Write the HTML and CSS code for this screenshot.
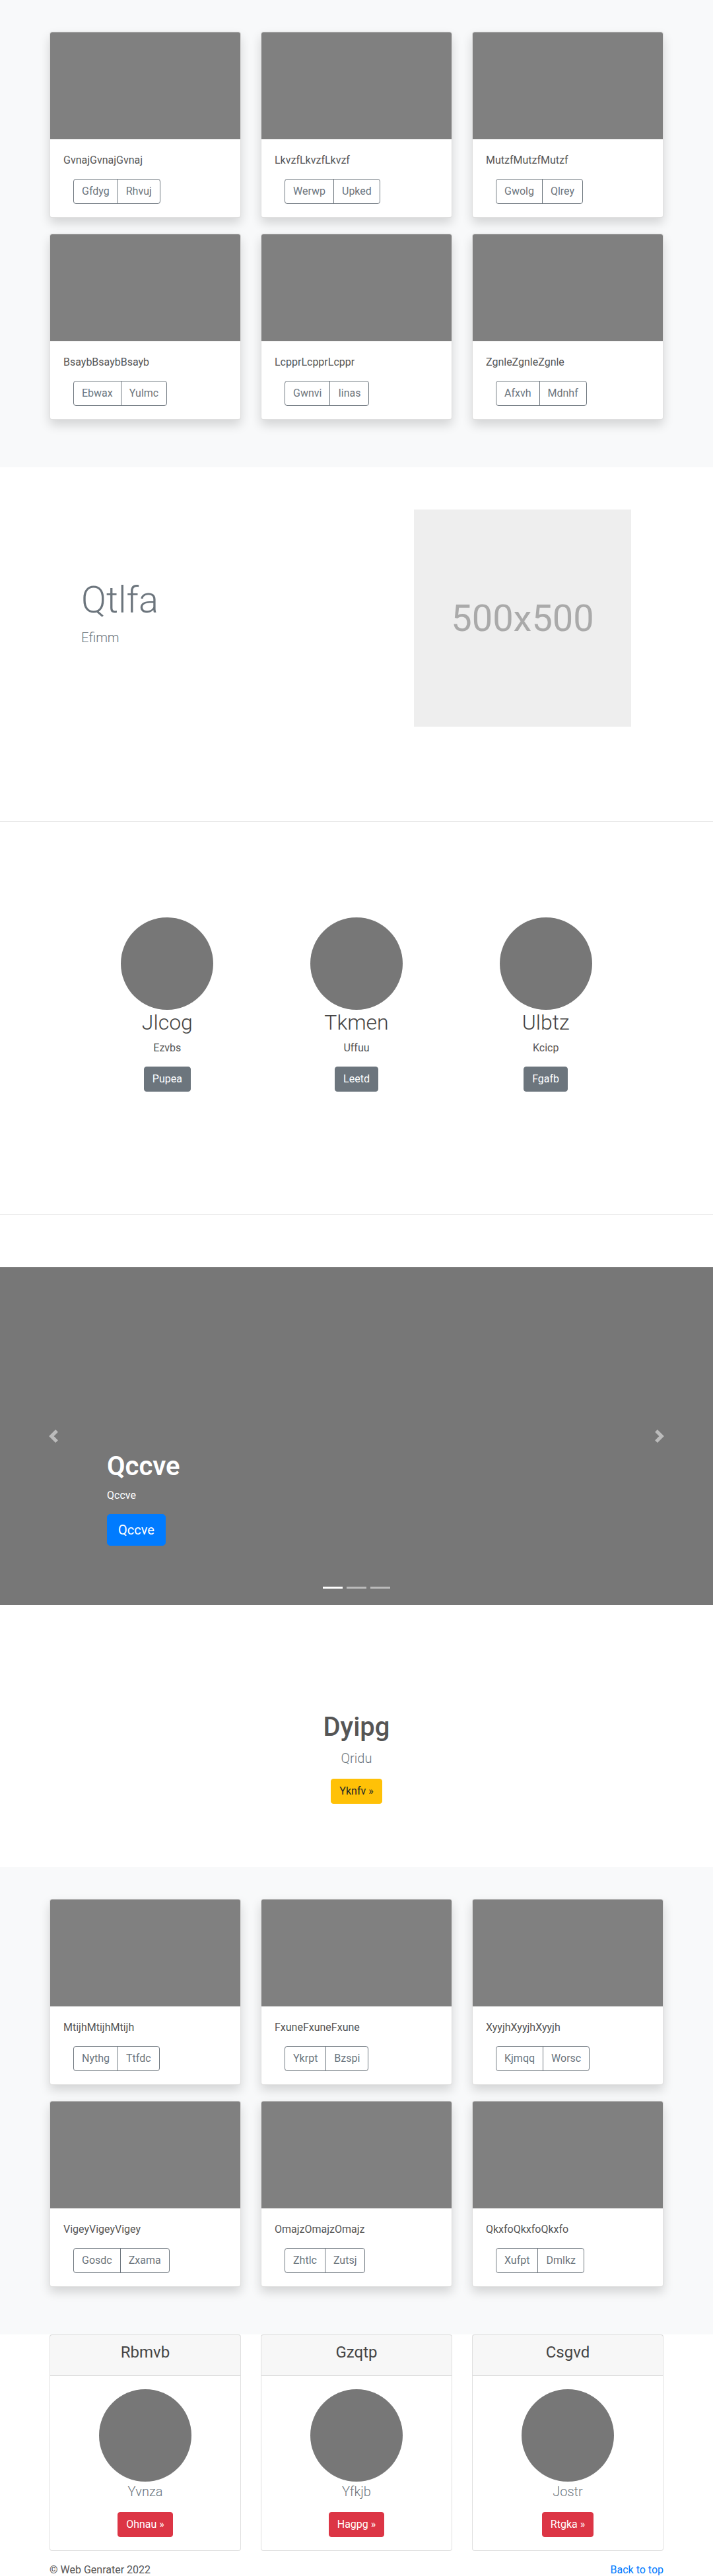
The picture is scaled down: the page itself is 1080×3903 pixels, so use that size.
FILE: index.html
```html
<!DOCTYPE html>
<html lang="en">
<head>
<meta charset="utf-8">
<title>Web Genrater</title>
<link rel="stylesheet" href="styles.css">
</head>
<body>

<section class="album">
  <div class="container">
    <div class="card-grid">
      <div class="card"><div class="card-img"></div><div class="card-body"><p class="card-text">GvnajGvnajGvnaj</p><div class="btn-group"><button class="btn btn-outline">Gfdyg</button><button class="btn btn-outline">Rhvuj</button></div></div></div>
      <div class="card"><div class="card-img"></div><div class="card-body"><p class="card-text">LkvzfLkvzfLkvzf</p><div class="btn-group"><button class="btn btn-outline">Werwp</button><button class="btn btn-outline">Upked</button></div></div></div>
      <div class="card"><div class="card-img"></div><div class="card-body"><p class="card-text">MutzfMutzfMutzf</p><div class="btn-group"><button class="btn btn-outline">Gwolg</button><button class="btn btn-outline">Qlrey</button></div></div></div>
      <div class="card"><div class="card-img"></div><div class="card-body"><p class="card-text">BsaybBsaybBsayb</p><div class="btn-group"><button class="btn btn-outline">Ebwax</button><button class="btn btn-outline">Yulmc</button></div></div></div>
      <div class="card"><div class="card-img"></div><div class="card-body"><p class="card-text">LcpprLcpprLcppr</p><div class="btn-group"><button class="btn btn-outline">Gwnvi</button><button class="btn btn-outline">Iinas</button></div></div></div>
      <div class="card"><div class="card-img"></div><div class="card-body"><p class="card-text">ZgnleZgnleZgnle</p><div class="btn-group"><button class="btn btn-outline">Afxvh</button><button class="btn btn-outline">Mdnhf</button></div></div></div>
    </div>
  </div>
</section>

<section class="featurette">
  <div class="container feature-row">
    <div class="feature-text">
      <h1 class="display">Qtlfa</h1>
      <p class="lead muted">Efimm</p>
    </div>
    <div class="placeholder"><span>500x500</span></div>
  </div>
</section>

<hr class="divider">

<section class="marketing">
  <div class="marketing-grid">
    <div class="mk-col">
      <div class="circle"></div>
      <h2 class="mk-title">Jlcog</h2>
      <p class="mk-text">Ezvbs</p>
      <button class="btn btn-secondary">Pupea</button>
    </div>
    <div class="mk-col">
      <div class="circle"></div>
      <h2 class="mk-title">Tkmen</h2>
      <p class="mk-text">Uffuu</p>
      <button class="btn btn-secondary">Leetd</button>
    </div>
    <div class="mk-col">
      <div class="circle"></div>
      <h2 class="mk-title">Ulbtz</h2>
      <p class="mk-text">Kcicp</p>
      <button class="btn btn-secondary">Fgafb</button>
    </div>
  </div>
</section>

<hr class="divider">

<section class="carousel">
  <div class="carousel-caption">
    <h1 class="caption-title">Qccve</h1>
    <p class="caption-text">Qccve</p>
    <p class="caption-action"><button class="btn btn-lg btn-primary">Qccve</button></p>
  </div>
  <div class="carousel-control prev">
    <svg class="control-icon" viewBox="0 0 8 8" width="20" height="20"><path fill="#fff" d="M5.25 0l-4 4 4 4 1.5-1.5L4.25 4l2.5-2.5L5.25 0z"/></svg>
  </div>
  <div class="carousel-control next">
    <svg class="control-icon" viewBox="0 0 8 8" width="20" height="20"><path fill="#fff" d="M2.75 0l-1.5 1.5L3.75 4l-2.5 2.5L2.75 8l4-4-4-4z"/></svg>
  </div>
  <ol class="indicators">
    <li class="active"></li>
    <li></li>
    <li></li>
  </ol>
</section>

<section class="cta">
  <h1 class="cta-title">Dyipg</h1>
  <p class="lead muted">Qridu</p>
  <p class="cta-action"><button class="btn btn-warning">Yknfv »</button></p>
</section>

<section class="album">
  <div class="container">
    <div class="card-grid">
      <div class="card"><div class="card-img"></div><div class="card-body"><p class="card-text">MtijhMtijhMtijh</p><div class="btn-group"><button class="btn btn-outline">Nythg</button><button class="btn btn-outline">Ttfdc</button></div></div></div>
      <div class="card"><div class="card-img"></div><div class="card-body"><p class="card-text">FxuneFxuneFxune</p><div class="btn-group"><button class="btn btn-outline">Ykrpt</button><button class="btn btn-outline">Bzspi</button></div></div></div>
      <div class="card"><div class="card-img"></div><div class="card-body"><p class="card-text">XyyjhXyyjhXyyjh</p><div class="btn-group"><button class="btn btn-outline">Kjmqq</button><button class="btn btn-outline">Worsc</button></div></div></div>
      <div class="card"><div class="card-img"></div><div class="card-body"><p class="card-text">VigeyVigeyVigey</p><div class="btn-group"><button class="btn btn-outline">Gosdc</button><button class="btn btn-outline">Zxama</button></div></div></div>
      <div class="card"><div class="card-img"></div><div class="card-body"><p class="card-text">OmajzOmajzOmajz</p><div class="btn-group"><button class="btn btn-outline">Zhtlc</button><button class="btn btn-outline">Zutsj</button></div></div></div>
      <div class="card"><div class="card-img"></div><div class="card-body"><p class="card-text">QkxfoQkxfoQkxfo</p><div class="btn-group"><button class="btn btn-outline">Xufpt</button><button class="btn btn-outline">Dmlkz</button></div></div></div>
    </div>
  </div>
</section>

<section class="team">
  <div class="container">
    <div class="card-grid">
      <div class="pcard">
        <div class="pcard-header"><h4 class="pcard-title">Rbmvb</h4></div>
        <div class="pcard-body">
          <div class="circle"></div>
          <p class="lead muted name">Yvnza</p>
          <button class="btn btn-danger">Ohnau »</button>
        </div>
      </div>
      <div class="pcard">
        <div class="pcard-header"><h4 class="pcard-title">Gzqtp</h4></div>
        <div class="pcard-body">
          <div class="circle"></div>
          <p class="lead muted name">Yfkjb</p>
          <button class="btn btn-danger">Hagpg »</button>
        </div>
      </div>
      <div class="pcard">
        <div class="pcard-header"><h4 class="pcard-title">Csgvd</h4></div>
        <div class="pcard-body">
          <div class="circle"></div>
          <p class="lead muted name">Jostr</p>
          <button class="btn btn-danger">Rtgka »</button>
        </div>
      </div>
    </div>
  </div>
</section>

<footer class="footer">
  <div class="container footer-row">
    <p class="copy">© Web Genrater 2022</p>
    <a class="back" href="#">Back to top</a>
  </div>
</footer>

</body>
</html>
```

FILE: styles.css
```css
* { box-sizing: border-box; }

html, body { margin: 0; padding: 0; }

body {
  font-family: "Segoe UI", Roboto, "Helvetica Neue", Arial, "Noto Sans", sans-serif;
  font-size: 16px;
  line-height: 24px;
  color: #555;
  background: #fff;
}

h1, h2, h4, p { margin: 0; }

.container { width: 930px; margin: 0 auto; }

/* Buttons */
.btn {
  display: inline-block;
  font-family: inherit;
  font-size: 16px;
  line-height: 24px;
  padding: 6px 12px;
  border: 1px solid transparent;
  border-radius: 4px;
  background: transparent;
  cursor: pointer;
  vertical-align: middle;
}
.btn-lg { font-size: 20px; line-height: 30px; padding: 8px 16px; border-radius: 5px; }
.btn-outline { color: #6c757d; border-color: #6c757d; }
.btn-secondary { color: #fff; background: #6c757d; border-color: #6c757d; }
.btn-primary { color: #fff; background: #007bff; border-color: #007bff; }
.btn-warning { color: #212529; background: #ffc107; border-color: #ffc107; }
.btn-danger { color: #fff; background: #dc3545; border-color: #dc3545; }

.btn-group { display: inline-flex; margin-left: 15px; }
.btn-group .btn:first-child { border-top-right-radius: 0; border-bottom-right-radius: 0; }
.btn-group .btn + .btn { margin-left: -1px; border-top-left-radius: 0; border-bottom-left-radius: 0; }

.muted { color: #6c757d; }
.lead { font-size: 20px; line-height: 30px; font-weight: 300; }

/* Album */
.album { background: #f8f9fa; padding: 48px 0; }
.card-grid {
  display: grid;
  grid-template-columns: repeat(3, 290px);
  column-gap: 30px;
  row-gap: 24px;
}
.album .card-grid { padding-bottom: 24px; }
.card {
  background: #fff;
  border: 1px solid rgba(0,0,0,.125);
  border-radius: 4px;
  box-shadow: 0 8px 16px rgba(0,0,0,.15);
  overflow: hidden;
}
.card-img { height: 162px; background: #808080; }
.card-body { padding: 20px; }
.card-text { margin-bottom: 16px; color: #555; }

/* Featurette */
.featurette { padding: 64px 0 143px; }
.feature-row { display: flex; align-items: center; }
.feature-text { flex: 1; padding-left: 48px; }
.display { font-size: 56px; line-height: 67px; font-weight: 300; color: #6c757d; margin-bottom: 8px; }
.feature-text .lead { margin-bottom: 16px; }
.placeholder {
  width: 329px; height: 329px; margin-right: 49px;
  background: #eee; color: #aaa;
  display: flex; align-items: center; justify-content: center;
  font-size: 56px; line-height: 1;
}

.divider { margin: 0; border: 0; border-top: 1px solid rgba(0,0,0,.1); height: 0; }

/* Marketing */
.marketing { padding: 145px 0 186px; }
.marketing-grid { width: 860px; margin: 0 auto; display: grid; grid-template-columns: repeat(3, 1fr); }
.mk-col { text-align: center; }
.circle { width: 140px; height: 140px; border-radius: 50%; background: #777; margin: 0 auto; }
.mk-title { font-size: 32px; line-height: 38px; font-weight: 300; color: #444; margin-bottom: 8px; }
.mk-text { margin-bottom: 16px; }

/* Carousel */
.carousel { position: relative; height: 512px; background: #777; margin-top: 79px; }
.carousel-caption {
  position: absolute; left: 162px; right: 162px; bottom: 54px;
  padding: 20px 0; color: #fff; text-align: left;
}
.caption-title { font-size: 40px; line-height: 48px; font-weight: 600; margin-bottom: 8px; }
.caption-text { margin-bottom: 16px; }
.caption-action { margin-bottom: 16px; }
.carousel-control {
  position: absolute; top: 0; bottom: 0; width: 162px;
  display: flex; align-items: center; justify-content: center; opacity: .5;
}
.carousel-control.prev { left: 0; }
.carousel-control.next { right: 0; }
.control-icon { display: block; }
.indicators {
  position: absolute; left: 0; right: 0; bottom: 15px;
  display: flex; justify-content: center; list-style: none; margin: 0; padding: 0;
}
.indicators li {
  width: 30px; height: 3px; margin: 10px 3px; background: #fff; opacity: .5;
}
.indicators li.active { opacity: 1; }

/* CTA */
.cta { text-align: center; padding: 161px 0 80px; }
.cta-title { font-size: 40px; line-height: 48px; font-weight: 500; color: #555; margin-bottom: 8px; }
.cta .lead { margin-bottom: 16px; }
.cta-action { margin-bottom: 16px; }

/* Team cards */
.pcard { border: 1px solid rgba(0,0,0,.125); border-radius: 4px; background: #fff; }
.pcard-header {
  background: rgba(0,0,0,.03); border-bottom: 1px solid rgba(0,0,0,.125);
  padding: 12px 20px; text-align: center;
}
.pcard-title { font-size: 24px; line-height: 29px; font-weight: 400; color: #444; margin-bottom: 8px; }
.pcard-body { padding: 20px; text-align: center; }
.name { margin-bottom: 16px; }

/* Footer */
.footer { padding-top: 17px; }
.footer-row { display: flex; justify-content: space-between; }
.copy { color: #555; }
.back { color: #007bff; text-decoration: none; }
```
